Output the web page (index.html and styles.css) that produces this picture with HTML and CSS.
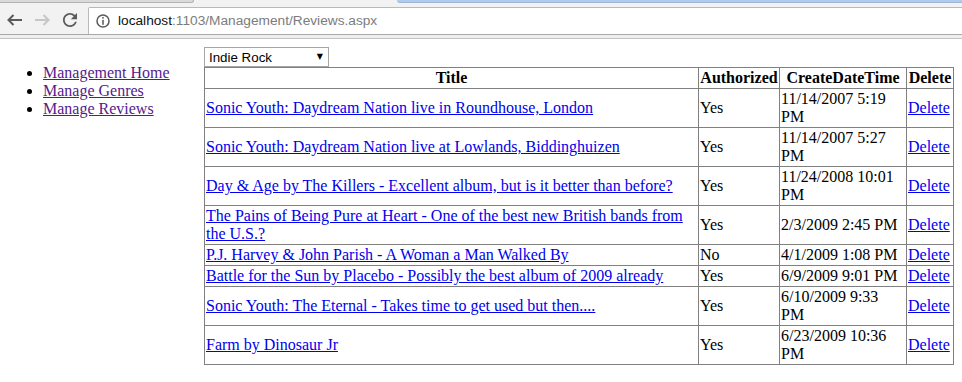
FILE: index.html
```html
<!DOCTYPE html>
<html lang="en">
<head>
    <meta charset="UTF-8">
    <title>Reviews</title>
    <link rel="stylesheet" href="styles.css">
</head>
<body>
    <!-- browser frame -->
    <div class="chrome">
        <div class="tabs">
            <span class="tab-left"></span>
            <span class="tab-right"></span>
        </div>
        <div class="toolbar">
            <span class="tool-btn">
                <svg width="15" height="12" viewBox="0 0 15 12"><path d="M15 6H1.5M6.5 1L1.5 6l5 5" fill="none" stroke="#5a5a5a" stroke-width="2"/></svg>
            </span>
            <span class="tool-btn">
                <svg width="15" height="12" viewBox="0 0 15 12"><path d="M0 6h13.5M8.5 1l5 5-5 5" fill="none" stroke="#c6c6c6" stroke-width="2"/></svg>
            </span>
            <span class="tool-btn">
                <svg width="14" height="14" viewBox="4 4 16 16"><path d="M17.65 6.35C16.2 4.9 14.21 4 12 4c-4.42 0-7.99 3.58-7.99 8s3.57 8 7.990 8c3.73 0 6.84-2.55 7.73-6h-2.08c-.82 2.33-3.04 4-5.65 4-3.31 0-6-2.69-6-6s2.69-6 6-6c1.66 0 3.14.69 4.22 1.78L13 11h7V4l-2.35 2.35z" fill="#5a5a5a"/></svg>
            </span>
            <div class="omnibox">
                <svg width="14" height="14" viewBox="0 0 14 14"><circle cx="7" cy="7" r="6" fill="none" stroke="#5a5a5a" stroke-width="1.5"/><rect x="6.25" y="3" width="1.5" height="1.6" fill="#5a5a5a"/><rect x="6.25" y="5.8" width="1.5" height="5" fill="#5a5a5a"/></svg>
                <span class="host">localhost</span><span class="path">:1103/Management/Reviews.aspx</span>
            </div>
        </div>
        <div class="infobar"></div>
    </div>

    <div class="page">
        <ul class="menu">
            <li><a href="#">Management Home</a></li>
            <li><a href="#">Manage Genres</a></li>
            <li><a href="#">Manage Reviews</a></li>
        </ul>
        <div class="main">
            <div class="genre-select">
                <select>
                    <option>Indie Rock</option>
                </select>
                <span class="arrow">&#9660;</span>
            </div>
            <table class="grid">
                <tr>
                    <th class="col-title">Title</th>
                    <th class="col-auth">Authorized</th>
                    <th class="col-date">CreateDateTime</th>
                    <th class="col-del">Delete</th>
                </tr>
                <tr>
                    <td><a href="#">Sonic Youth: Daydream Nation live in Roundhouse, London</a></td>
                    <td>Yes</td>
                    <td>11/14/2007 5:19 PM</td>
                    <td><a href="#">Delete</a></td>
                </tr>
                <tr>
                    <td><a href="#">Sonic Youth: Daydream Nation live at Lowlands, Biddinghuizen</a></td>
                    <td>Yes</td>
                    <td>11/14/2007 5:27 PM</td>
                    <td><a href="#">Delete</a></td>
                </tr>
                <tr>
                    <td><a href="#">Day &amp; Age by The Killers - Excellent album, but is it better than before?</a></td>
                    <td>Yes</td>
                    <td>11/24/2008 10:01 PM</td>
                    <td><a href="#">Delete</a></td>
                </tr>
                <tr>
                    <td><a href="#">The Pains of Being Pure at Heart - One of the best new British bands from the U.S.?</a></td>
                    <td>Yes</td>
                    <td>2/3/2009 2:45 PM</td>
                    <td><a href="#">Delete</a></td>
                </tr>
                <tr>
                    <td><a href="#">P.J. Harvey &amp; John Parish - A Woman a Man Walked By</a></td>
                    <td>No</td>
                    <td>4/1/2009 1:08 PM</td>
                    <td><a href="#">Delete</a></td>
                </tr>
                <tr>
                    <td><a href="#">Battle for the Sun by Placebo - Possibly the best album of 2009 already</a></td>
                    <td>Yes</td>
                    <td>6/9/2009 9:01 PM</td>
                    <td><a href="#">Delete</a></td>
                </tr>
                <tr>
                    <td><a href="#">Sonic Youth: The Eternal - Takes time to get used but then....</a></td>
                    <td>Yes</td>
                    <td>6/10/2009 9:33 PM</td>
                    <td><a href="#">Delete</a></td>
                </tr>
                <tr>
                    <td><a href="#">Farm by Dinosaur Jr</a></td>
                    <td>Yes</td>
                    <td>6/23/2009 10:36 PM</td>
                    <td><a href="#">Delete</a></td>
                </tr>
            </table>
        </div>
    </div>
</body>
</html>
```

FILE: styles.css
```css
body {
    margin: 0;
    background: #ffffff;
    color: #000000;
    font-family: "Liberation Serif", "Times New Roman", serif;
    font-size: 16px;
    line-height: 18px;
}
/* Browser frame */
.chrome {
    height: 39px;
    background: #f2f2f2;
    font-family: "Liberation Sans", Arial, sans-serif;
}
.tabs {
    display: flex;
    height: 3px;
}
.tab-left {
    width: 194px;
    background: #dadada;
    border-right: 1px solid #b4b4b4;
    border-bottom: 1px solid #b4b4b4;
    border-bottom-right-radius: 3px;
    box-sizing: border-box;
}
.tab-right {
    flex: 1;
    margin-left: 203px;
    background: #b1cbee;
    border-bottom: 1px solid #9fb6d6;
    border-bottom-left-radius: 3px;
}
.toolbar {
    display: flex;
    height: 31px;
    border-bottom: 1px solid #a9a9a9;
}
.tool-btn {
    width: 28px;
    display: flex;
    justify-content: center;
    align-items: center;
    padding-top: 3px;
    box-sizing: border-box;
}
.omnibox {
    align-self: flex-end;
    flex: 1;
    height: 27px;
    margin-left: 4px;
    margin-right: -6px;
    padding-left: 7px;
    box-sizing: border-box;
    background: #ffffff;
    border: 1px solid #b9b9b9;
    border-bottom: none;
    border-top-left-radius: 2px;
    display: flex;
    align-items: center;
    font-size: 13.7px;
}
.omnibox svg {
    margin-right: 8px;
}
.host {
    color: #111111;
}
.path {
    color: #7c7c7c;
}
.infobar {
    height: 3px;
    background: #efefef;
    border-bottom: 1px solid #c3c3c3;
}
/* Page */
.page {
    display: flex;
    padding: 8px;
}
.menu {
    width: 196px;
    flex-shrink: 0;
    margin: 17px 0 0;
    padding-left: 35px;
    box-sizing: border-box;
}
.menu a {
    color: #551a8b;
}
.main {
    flex: 1;
    min-width: 0;
}
.genre-select {
    position: relative;
    width: 125px;
    height: 20px;
}
.genre-select select {
    width: 100%;
    height: 20px;
    -webkit-appearance: none;
    appearance: none;
    border: 1px solid #a6a6a6;
    border-radius: 0;
    background: #ffffff;
    color: #000000;
    padding: 0 0 0 4px;
    margin: 0;
    font-family: "Liberation Sans", Arial, sans-serif;
    font-size: 13.33px;
    display: block;
}
.genre-select .arrow {
    position: absolute;
    right: 6px;
    top: 1px;
    font-family: "DejaVu Sans", sans-serif;
    font-size: 8px;
    line-height: 18px;
    pointer-events: none;
}
.grid {
    width: 750px;
    border-collapse: collapse;
    table-layout: fixed;
}
.grid th,
.grid td {
    border: 1px solid #808080;
    padding: 1px;
    vertical-align: middle;
}
.grid th {
    font-weight: bold;
    text-align: center;
    white-space: nowrap;
}
.grid td {
    text-align: left;
}
.grid .col-auth {
    width: 78px;
}
.grid .col-date {
    width: 124px;
}
.grid .col-del {
    width: 44px;
}
.grid a {
    color: #0000ee;
}
```
